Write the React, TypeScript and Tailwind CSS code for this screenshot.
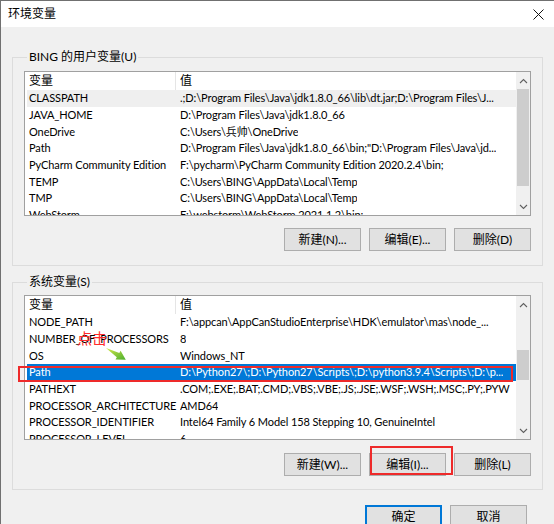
import React from 'react'

const FONT = "font-[family-name:Lato,'Noto_Sans_CJK_SC',sans-serif]"

interface Item {
  name: string
  value: string
  hl?: boolean
  sel?: boolean
}

const userVars: Item[] = [
  { name: 'CLASSPATH', value: '.;D:\\Program Files\\Java\\jdk1.8.0_66\\lib\\dt.jar;D:\\Program Files\\J...', hl: true },
  { name: 'JAVA_HOME', value: 'D:\\Program Files\\Java\\jdk1.8.0_66' },
  { name: 'OneDrive', value: 'C:\\Users\\兵帅\\OneDrive' },
  { name: 'Path', value: 'D:\\Program Files\\Java\\jdk1.8.0_66\\bin;"D:\\Program Files\\Java\\jd...' },
  { name: 'PyCharm Community Edition', value: 'F:\\pycharm\\PyCharm Community Edition 2020.2.4\\bin;' },
  { name: 'TEMP', value: 'C:\\Users\\BING\\AppData\\Local\\Temp' },
  { name: 'TMP', value: 'C:\\Users\\BING\\AppData\\Local\\Temp' },
  { name: 'WebStorm', value: 'F:\\webstorm\\WebStorm 2021.1.2\\bin;' },
]

const sysVars: Item[] = [
  { name: 'NODE_PATH', value: 'F:\\appcan\\AppCanStudioEnterprise\\HDK\\emulator\\mas\\node_...' },
  { name: 'NUMBER_OF_PROCESSORS', value: '8' },
  { name: 'OS', value: 'Windows_NT' },
  { name: 'Path', value: 'D:\\Python27\\;D:\\Python27\\Scripts\\;D:\\python3.9.4\\Scripts\\;D:\\p...', sel: true },
  { name: 'PATHEXT', value: '.COM;.EXE;.BAT;.CMD;.VBS;.VBE;.JS;.JSE;.WSF;.WSH;.MSC;.PY;.PYW' },
  { name: 'PROCESSOR_ARCHITECTURE', value: 'AMD64' },
  { name: 'PROCESSOR_IDENTIFIER', value: 'Intel64 Family 6 Model 158 Stepping 10, GenuineIntel' },
  { name: 'PROCESSOR_LEVEL', value: '6' },
]

const Chevron = ({ up }: { up?: boolean }) => (
  <svg width="9" height="6" viewBox="0 0 9 6">
    <path d={up ? 'M1 5 L4.5 1.5 L8 5' : 'M1 1 L4.5 4.5 L8 1'} fill="none" stroke="#606060" strokeWidth="1.1" />
  </svg>
)

const VarList = ({ items, thumbTop, thumbH }: { items: Item[]; thumbTop: string; thumbH: string }) => (
  <div className="flex h-[145px] min-w-0 border border-[#a0a0a0] bg-white overflow-hidden">
    <div className="flex-1 min-w-0 flex flex-col overflow-hidden">
      {/* 表头 */}
      <div className="flex h-[18px] shrink-0 items-center">
        <div className="w-[151px] pl-[4px] border-r border-[#e5e5e5] h-full flex items-center">变量</div>
        <div className="pl-[4px]">值</div>
      </div>
      {items.map((it) => (
        <div
          key={it.name}
          className={`flex h-[16.67px] shrink-0 items-center ml-[2px] whitespace-nowrap text-[11px] tracking-[-0.1px] ${
            it.sel ? 'bg-[#0078d7] text-white' : it.hl ? 'bg-[#efefef]' : ''
          }`}
        >
          <div className="w-[153px] shrink-0 pl-[2px] overflow-hidden">{it.name}</div>
          <div className="min-w-0 overflow-hidden">{it.value}</div>
        </div>
      ))}
    </div>
    {/* 滚动条 */}
    <div className="w-[14px] shrink-0 flex flex-col bg-[#f0f0f0]">
      <div className="h-[17px] flex items-center justify-center">
        <Chevron up />
      </div>
      <div className="flex-1">
        <div className={`${thumbTop} ${thumbH} mx-[1px] bg-[#cdcdcd]`} />
      </div>
      <div className="h-[17px] flex items-center justify-center">
        <Chevron />
      </div>
    </div>
  </div>
)

const Btn = ({ label }: { label: string }) => (
  <button className="w-[77px] h-[23px] border border-[#adadad] bg-[#e1e1e1] text-[12px] leading-none">
    {label}
  </button>
)

export default function App() {
  return (
    <div className={`relative w-[554px] h-[524px] overflow-hidden bg-[#f0f0f0] border-l border-t border-[#707070] text-[12px] leading-[16px] text-black ${FONT}`}>
      {/* 标题栏 */}
      <div className="h-[26px] bg-white flex items-center justify-between pl-[7px] pr-[10px]">
        <span>环境变量</span>
        <svg width="11" height="11" viewBox="0 0 11 11">
          <path d="M0.5 0.5 L10.5 10.5 M10.5 0.5 L0.5 10.5" stroke="#111" strokeWidth="1" />
        </svg>
      </div>

      {/* 用户变量 */}
      <fieldset className="ml-[11px] mt-[22px] w-[531px] min-w-0 border border-[#dcdcdc] px-[11px] pt-[6px] pb-[14px]">
        <legend className="ml-[3px] px-[2px] leading-[16px]">BING 的用户变量(U)</legend>
        <VarList items={userVars} thumbTop="mt-0" thumbH="h-[97px]" />
        <div className="flex justify-end gap-2 mt-[12px]">
          <Btn label="新建(N)..." />
          <Btn label="编辑(E)..." />
          <Btn label="删除(D)" />
        </div>
      </fieldset>

      {/* 系统变量 */}
      <fieldset className="ml-[11px] mt-[8px] w-[531px] min-w-0 border border-[#dcdcdc] px-[11px] pt-[5px] pb-[13px]">
        <legend className="ml-[3px] px-[2px] leading-[16px]">系统变量(S)</legend>
        <VarList items={sysVars} thumbTop="mt-[37px]" thumbH="h-[30px]" />
        <div className="flex justify-end gap-2 mt-[13px]">
          <Btn label="新建(W)..." />
          <Btn label="编辑(I)..." />
          <Btn label="删除(L)" />
        </div>
      </fieldset>

      {/* 底部按钮 */}
      <div className="flex justify-end gap-2 mt-[15px] pr-[27px]">
        <button className="w-[77px] h-[23px] border-2 border-[#0078d7] bg-[#e1e1e1] text-[12px] leading-none">确定</button>
        <Btn label="取消" />
      </div>

      {/* 标注 */}
      <div className="absolute left-[17px] top-[365px] w-[495px] h-[16px] border-2 border-[#ee2a2a]" />
      <div className="absolute left-[369px] top-[445px] w-[83px] h-[29px] border-2 border-[#ee2a2a]" />
      <div className="absolute left-[76px] top-[328px] text-[15px] leading-[18px] text-[#ff2b2b]">点击</div>
      <svg className="absolute left-[104px] top-[346px]" width="26" height="18" viewBox="0 0 26 18">
        <defs>
          <linearGradient id="ga" x1="0" y1="0" x2="1" y2="1">
            <stop offset="0" stopColor="#d6e84a" />
            <stop offset="1" stopColor="#4caf2e" />
          </linearGradient>
        </defs>
        <polygon points="1,1 14.3,6 15.6,3.8 20.8,12.7 10.5,12.4 11.8,10.3" fill="url(#ga)" />
      </svg>
    </div>
  )
}
